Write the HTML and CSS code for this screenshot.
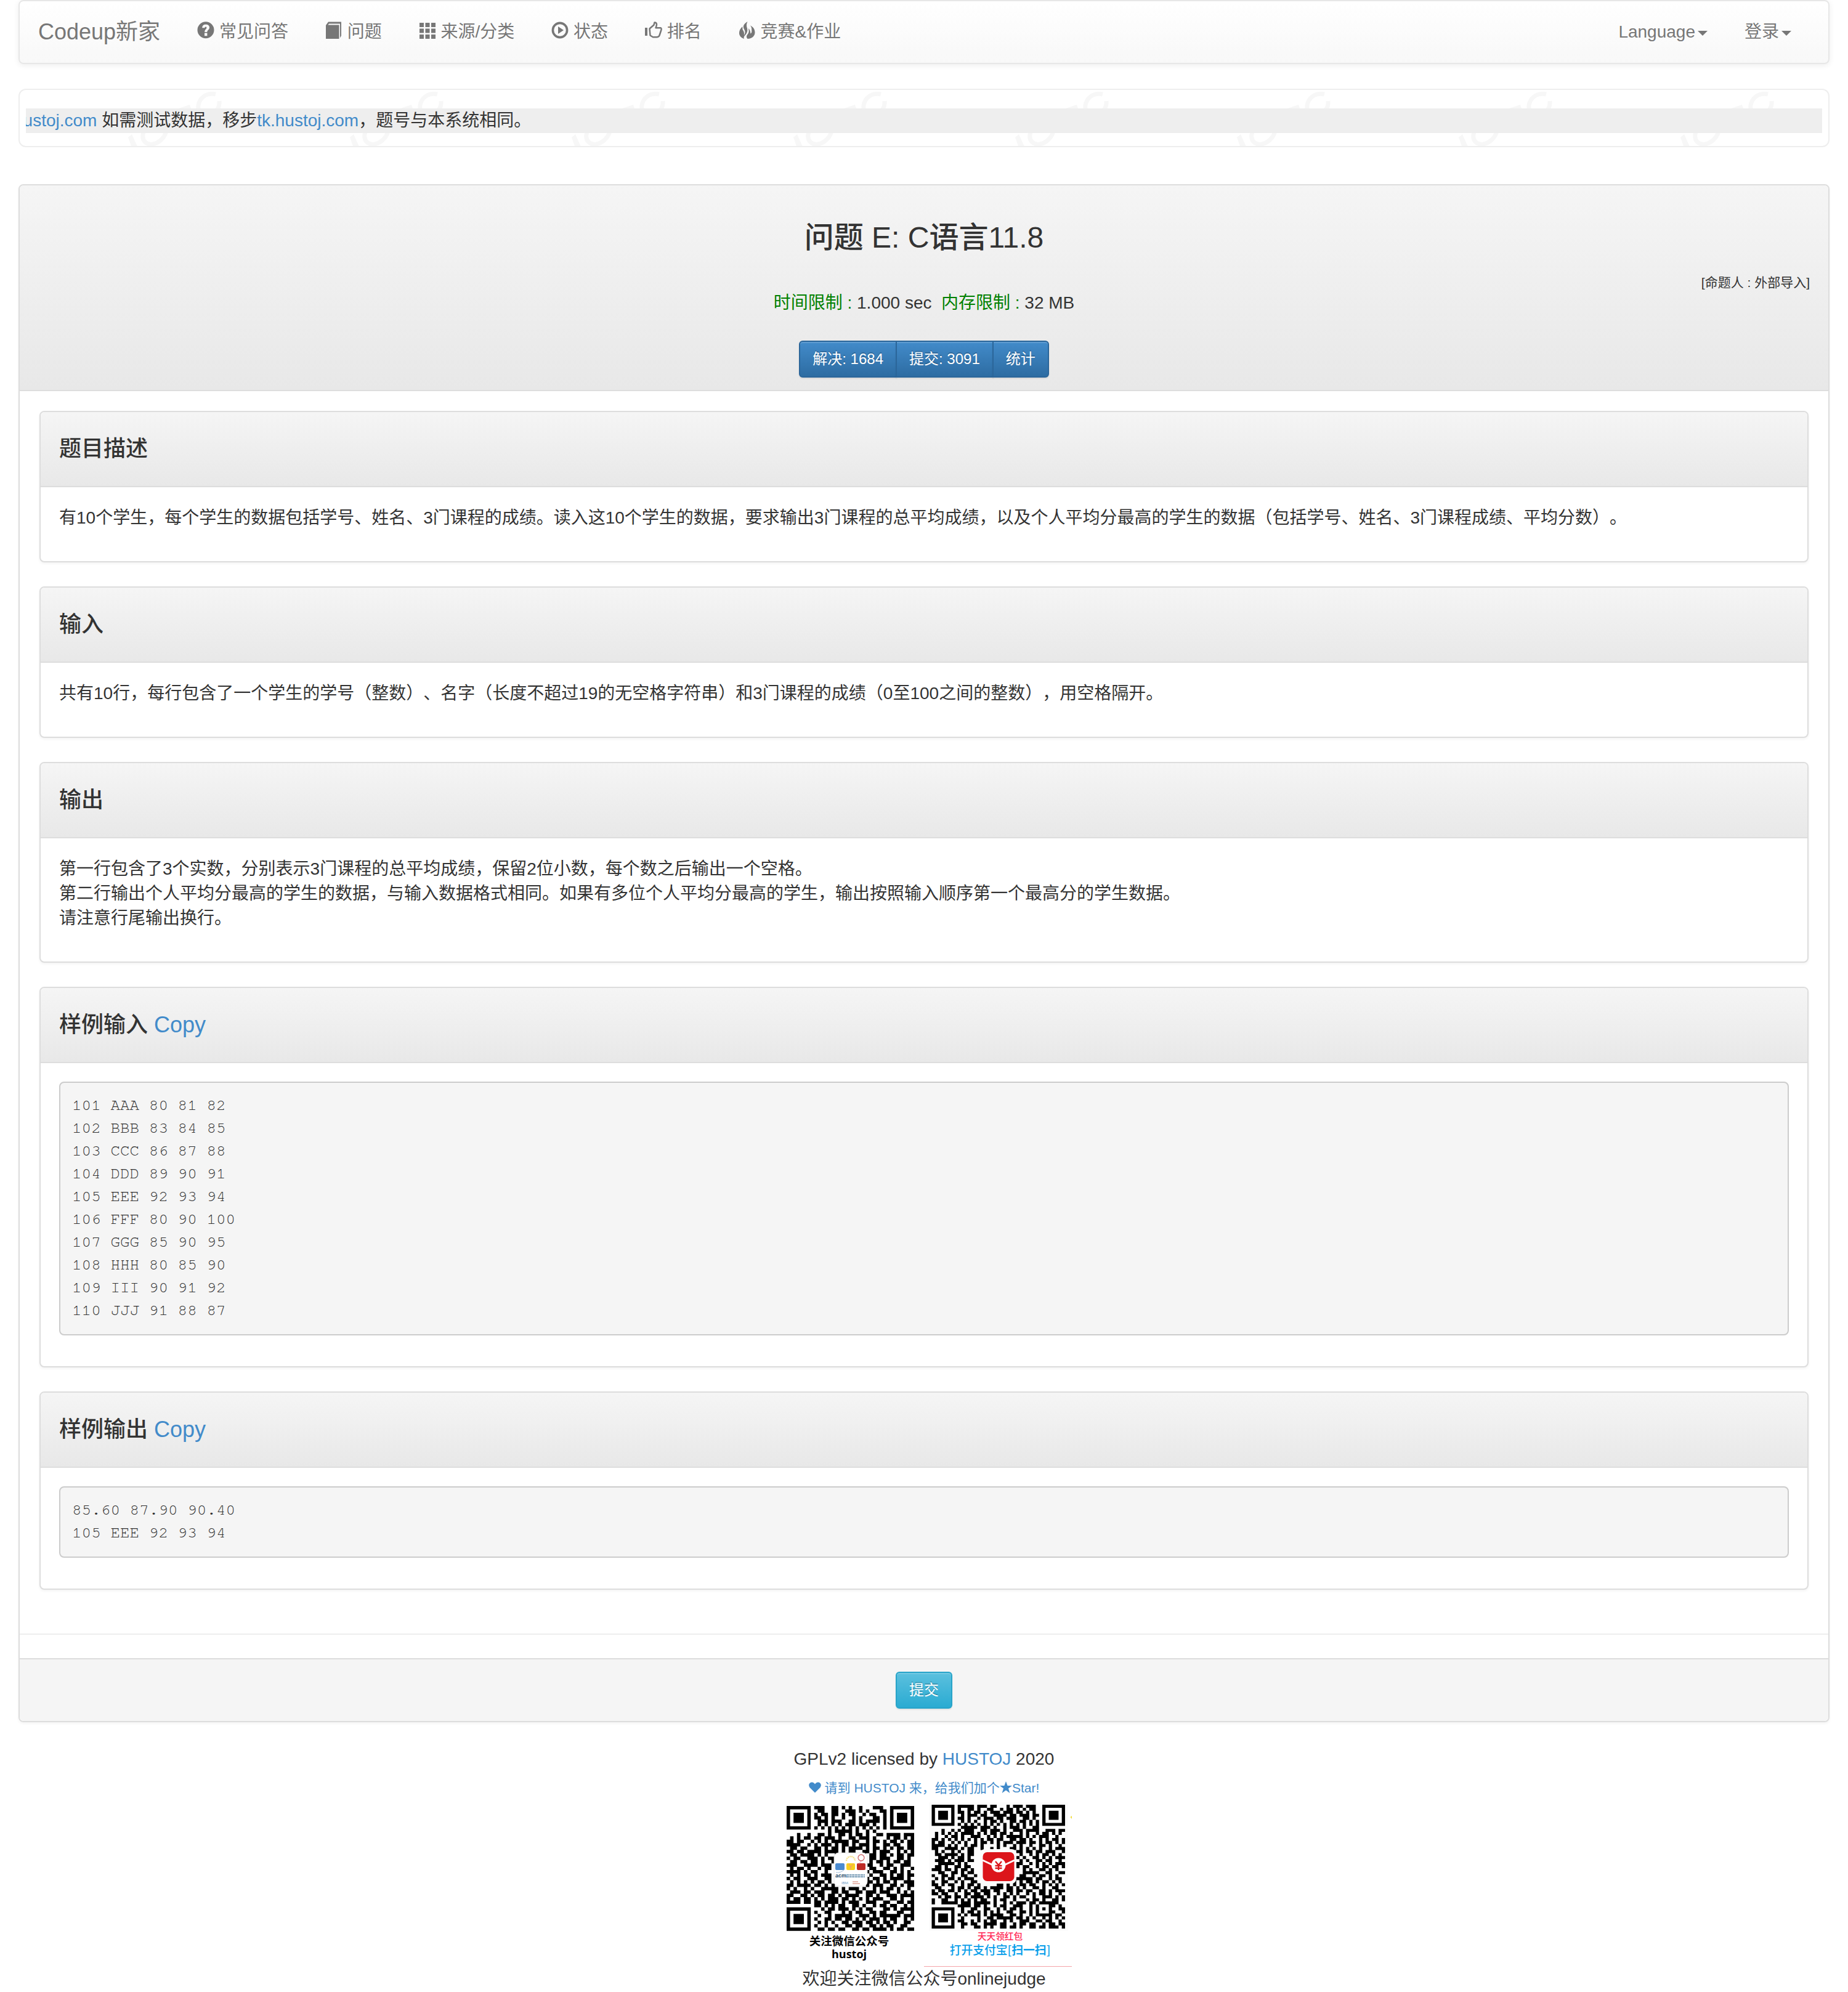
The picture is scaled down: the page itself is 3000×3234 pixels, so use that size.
FILE: index.html
```html
<!DOCTYPE html>
<html lang="zh-CN">
<head>
<meta charset="utf-8">
<title>问题 E: C语言11.8</title>
<link rel="stylesheet" href="styles.css">
</head>
<body>
<div class="container">
  <nav class="navbar">
    <a class="brand">Codeup新家</a>
    <ul class="nav">
      <li><svg class="icon" viewBox="0 0 28 28"><path fill-rule="evenodd" d="M14 .3a13.5 13.5 0 1 0 0 27a13.5 13.5 0 1 0 0-27zM12 18.6h4.4v4.6H12zM8.3 10.2C8.3 6.500 10.500 4.700 14.200 4.700c3.400 0 5.800 1.800 5.800 4.900c0 4-3.700 4.300-3.700 7.500H12.200c0-4.700 3.200-4.700 3.200-7.200c0-1-.5-1.500-1.500-1.500c-1.100 0-1.500.7-1.500 1.800z"/></svg> 常见问答</li>
      <li><svg class="icon" viewBox="0 0 28 28"><path d="M1 6L5 .5H26V23L24 26.500V3.500H6L4.500 5.500H22.500V28H1z"/></svg> 问题</li>
      <li><svg class="icon" viewBox="0 0 28 28"><path d="M1 2h7v7H1zM10.500 2h7v7h-7zM20 2h7v7h-7zM1 11.500h7v7H1zM10.500 11.500h7v7h-7zM20 11.500h7v7h-7zM1 21h7v7H1zM10.500 21h7v7h-7zM20 21h7v7h-7z"/></svg> 来源/分类</li>
      <li><svg class="icon" viewBox="0 0 28 28"><circle cx="14" cy="14" r="11.600" fill="none" stroke="currentColor" stroke-width="3.600"/><path d="M11 8l9 6l-9 6z"/></svg> 状态</li>
      <li><svg class="icon" viewBox="0 0 28 28"><path d="M0 10h4v13H0z"/><path fill="none" stroke="currentColor" stroke-width="2.500" stroke-linejoin="round" d="M7.500 11.500L14.500 5.500L15.500 1.500C20 1.200 19.500 6 17.500 10.200H25.500C27.500 11 26.700 13 26 15L23.500 22.500C22.500 25 21 25.200 19 25.200H13L8.500 22.500z"/></svg> 排名</li>
      <li><svg class="icon" viewBox="0 0 28 28"><path d="M14.500 0C8 4 6.500 8 9 12.500C11.500 17 10.500 20 8.800 22C9.500 18 8.500 15.500 6.500 13L6.300 8C2.500 11.500 1 15 1 18.500C1 23 4 26.500 9 28C7.800 25.500 9 24 11 21.800C15 17.500 14.800 13 13.500 9.500C12.500 6 13 3 14.500 0zM19 6.300C22 10.500 21 13 21.300 15.500C21.500 18 20 19.500 19.300 19.500C19.500 16 18 12.500 15.800 11C17.500 16 16.500 18.500 14 21.500C12.500 23.500 12.500 26 14.500 28C22.500 27.500 26.500 23 26.500 17.500C26.500 12 23 8.500 19 6.300z"/></svg> 竞赛&amp;作业</li>
    </ul>
    <ul class="nav nav-right">
      <li>Language<i class="caret"></i></li>
      <li>登录<i class="caret"></i></li>
    </ul>
  </nav>

  <section class="notice">
    <svg class="watermark" width="2936" height="91">
      <defs><pattern id="mark" x="160" y="0" width="360" height="91" patternUnits="userSpaceOnUse">
        <g fill="none" stroke="#f7f7f7" stroke-width="7"><path d="M158 7C146 4 135 10 131 21C128 30 131 37 138 38M148 38C158 36 165 31 164 18"/><ellipse cx="59" cy="69" rx="22" ry="16" transform="rotate(-45 59 69)"/></g>
        <path fill="#f7f7f7" d="M16 77L22 72L32 94H22zM92 32L116 24L120 36H92z"/>
      </pattern></defs>
      <rect width="2936" height="91" fill="url(#mark)"/>
    </svg>
    <div class="ticker"><span><a>hustoj.com</a> 如需测试数据，移步<a>tk.hustoj.com</a>，题号与本系统相同。</span></div>
  </section>

  <main class="panel problem">
    <header class="panel-heading problem-head">
      <h3>问题 E: C语言11.8</h3>
      <div class="author"><sub>[命题人 : 外部导入]</sub></div>
      <div class="limits"><span class="green">时间限制 : </span>1.000 sec&nbsp; <span class="green">内存限制 : </span>32 MB</div>
      <div class="btn-group"><a class="btn primary">解决: 1684</a><a class="btn primary">提交: 3091</a><a class="btn primary">统计</a></div>
    </header>
    <div class="sections">
      <section class="panel">
        <div class="panel-heading"><h4>题目描述</h4></div>
        <div class="panel-body"><p>有10个学生，每个学生的数据包括学号、姓名、3门课程的成绩。读入这10个学生的数据，要求输出3门课程的总平均成绩，以及个人平均分最高的学生的数据（包括学号、姓名、3门课程成绩、平均分数）。</p></div>
      </section>
      <section class="panel">
        <div class="panel-heading"><h4>输入</h4></div>
        <div class="panel-body"><p>共有10行，每行包含了一个学生的学号（整数）、名字（长度不超过19的无空格字符串）和3门课程的成绩（0至100之间的整数），用空格隔开。</p></div>
      </section>
      <section class="panel">
        <div class="panel-heading"><h4>输出</h4></div>
        <div class="panel-body"><p>第一行包含了3个实数，分别表示3门课程的总平均成绩，保留2位小数，每个数之后输出一个空格。<br>第二行输出个人平均分最高的学生的数据，与输入数据格式相同。如果有多位个人平均分最高的学生，输出按照输入顺序第一个最高分的学生数据。<br>请注意行尾输出换行。</p></div>
      </section>
      <section class="panel">
        <div class="panel-heading"><h4>样例输入 <a>Copy</a></h4></div>
        <div class="panel-body"><pre>101 AAA 80 81 82
102 BBB 83 84 85
103 CCC 86 87 88
104 DDD 89 90 91
105 EEE 92 93 94
106 FFF 80 90 100
107 GGG 85 90 95
108 HHH 80 85 90
109 III 90 91 92
110 JJJ 91 88 87</pre></div>
      </section>
      <section class="panel">
        <div class="panel-heading"><h4>样例输出 <a>Copy</a></h4></div>
        <div class="panel-body"><pre>85.60 87.90 90.40
105 EEE 92 93 94</pre></div>
      </section>
    </div>
    <hr>
    <footer class="panel-footer"><a class="btn info">提交</a></footer>
  </main>

  <footer class="site-footer">
    <div>GPLv2 licensed by <a>HUSTOJ</a> 2020</div>
    <div class="star-line"><a><svg class="mini" viewBox="0 0 20 20"><path d="M10 18.500L1.500 10C-1.500 6 1 1.500 5 1.500C7.500 1.500 9 3 10 4.500C11 3 12.500 1.500 15 1.500C19 1.500 21.500 6 18.500 10z"/></svg> 请到 HUSTOJ 来，给我们加个<svg class="mini" viewBox="0 0 20 20"><path d="M10 0L12.600 7H20L14 11.600L16.300 19L10 14.600L3.700 19L6 11.600L0 7H7.400z"/></svg>Star!</a></div>
    <div class="codes">
      <svg width="240" height="272" viewBox="0 0 240 272">
        <g transform="translate(17 10) scale(5.595 5.48)"><path id="qr-wechat"/></g>
        <rect x="94" y="86" width="54" height="54" rx="7" fill="#fff" stroke="#ddd" stroke-width=".8"/>
        <rect x="96" y="103" width="15" height="11" rx="2" fill="#4b8bd0"/><rect x="114" y="103" width="14" height="11" rx="2" fill="#f8cf20"/><rect x="131" y="103" width="14" height="11" rx="2" fill="#bd2a25"/>
        <path d="M114 99a7 7 0 0 1 14 0" fill="none" stroke="#f5e08a" stroke-width="2.500" stroke-dasharray="2 1"/><circle cx="138" cy="94" r="5" fill="none" stroke="#c66" stroke-width="1.300"/><path d="M138 99l-4 6M118 104l3 5l4-5M121 109v4" fill="none" stroke="#e7a" stroke-width=".8"/><path d="M97 118q8 1 14-5" fill="none" stroke="#8ac" stroke-width=".8"/>
        <text x="96" y="126" class="logo-text acm">acm</text><path d="M114 122h30M114 125h30" stroke="#48789c" stroke-width="1.600" stroke-dasharray="4 .6"/>
        <text x="106" y="137" class="logo-text ibm">IBM.</text><path d="M124 133h9M124 136h12" stroke="#cf7563" stroke-width="1.200"/>
        <text x="118.500" y="236" class="cap-black">关注微信公众号</text>
        <text x="118.500" y="256.500" class="cap-black cap-en">hustoj</text>
      </svg><svg width="240" height="272" viewBox="0 0 240 272">
        <rect x="8" y="4" width="226" height="209" fill="#fcfcfc"/>
        <g transform="translate(12.500 8) scale(5.280 4.900)"><path id="qr-alipay"/></g>
        <rect x="91" y="80" width="59" height="56" rx="8" fill="#fcfcfc"/>
        <rect x="95.500" y="85" width="51" height="47" rx="7" fill="#dc151b"/>
        <path d="M95 98L112 106M147 98L130 106" stroke="#fff" stroke-width="3"/><circle cx="121" cy="106" r="11.500" fill="#fff"/>
        <path d="M116 100l5 6l5-6M121 106v8M115.500 107h11M115.500 111h11" fill="none" stroke="#dc151b" stroke-width="2.300"/>
        <text x="123.500" y="226.500" class="cap-red">天天领红包</text>
        <text x="123.500" y="251" class="cap-blue">打开支付宝[<tspan class="heavy">扫一扫</tspan>]</text>
        <path d="M0 270.500h240" stroke="#f5a3a9"/><path d="M237.500 28l2.500-2v5z" fill="#f3dc35"/>
      </svg>
    </div>
    <div class="welcome">欢迎关注微信公众号onlinejudge</div>
  </footer>
</div>
<script src="codes.js"></script>
</body>
</html>
```
FILE: styles.css
```css
* { box-sizing: border-box; }
body { margin: 0; background: #fff; color: #333; font: 28px/40px "Liberation Sans", "Noto Sans CJK SC", sans-serif; text-spacing-trim: space-all; }
a { color: #428bca; text-decoration: none; }
h3, h4, p, ul, pre { margin: 0; padding: 0; }
.container { width: 2940px; margin: 0 auto; }

.navbar { display: flex; height: 104px; border: 2px solid #e7e7e7; border-radius: 8px; padding: 0 30px; color: #777; background: linear-gradient(#fff, #f8f8f8); box-shadow: 0 2px 10px rgba(0,0,0,.075); }
.brand { color: #777; font-size: 36px; padding: 30px 30px 0 0; white-space: nowrap; }
.nav { display: flex; list-style: none; }
.nav li { padding: 30px 30px 0; white-space: nowrap; }
.nav-right { margin-left: auto; }
.icon { width: 28px; height: 28px; fill: currentColor; vertical-align: -2px; }
.caret { display: inline-block; margin-left: 4px; border: 8px solid transparent; border-top-color: #777; border-bottom: 0; vertical-align: middle; }

.notice { position: relative; height: 95px; margin-top: 40px; border: 2px solid #eee; border-radius: 12px; padding: 30px 10px; overflow: hidden; }
.watermark { position: absolute; left: 0; top: 0; }
.ticker { position: relative; height: 40px; background: #eee; overflow: hidden; white-space: nowrap; line-height: 39px; }
.ticker span { margin-left: -20px; }

.panel { border: 2px solid #ddd; border-radius: 8px; background: #fff; box-shadow: 0 2px 4px rgba(0,0,0,.05); }
.problem { margin-top: 60px; }
.panel-heading { padding: 20px 30px; border-bottom: 2px solid #ddd; border-radius: 6px 6px 0 0; background: linear-gradient(#f5f5f5, #e8e8e8); }
.panel-heading h4 { font-size: 36px; font-weight: 500; line-height: 39.6px; margin: 20px 0; }
.problem-head { text-align: center; height: 334px; }
.problem-head h3 { font-size: 48px; font-weight: 500; line-height: 52px; margin: 39px 0 19px; }
.author { text-align: right; height: 40px; line-height: 37px; }
.author sub { font-size: 21px; line-height: 0; }
.limits { height: 82px; line-height: 41px; }
.green { color: #008000; }
.btn-group { display: flex; justify-content: center; }
.btn { display: inline-block; height: 60px; padding: 10px 20px; border: 2px solid; border-radius: 6px; color: #fff; font-size: 24px; line-height: 35px; text-shadow: 0 -2px 0 rgba(0,0,0,.2); box-shadow: inset 0 2px 0 rgba(255,255,255,.15), 0 2px 2px rgba(0,0,0,.075); }
.primary { border-color: #2b669a; background: #3b7ab4 linear-gradient(#428bca, #2d6ca2); }
.btn-group .btn { border-radius: 0; }
.btn-group .btn + .btn { margin-left: -2px; }
.btn-group .btn:first-child { border-radius: 6px 0 0 6px; }
.btn-group .btn:last-child { border-radius: 0 6px 6px 0; }
.info { border-color: #28a4c9; background: linear-gradient(#5bc0de, #2aabd2); }

.sections { display: flex; flex-direction: column; gap: 39.5px; padding: 32px 32px 30px; }
.panel-body { padding: 30px; }
.panel-body p { margin-bottom: 20px; }
pre { margin-bottom: 20px; padding: 18px 19px 20px; border: 2px solid #ccc; border-radius: 8px; background: #f5f5f5; font: 26px/37px "Nimbus Mono PS", "Nimbus Mono L", "Courier 10 Pitch", FreeMono, "Liberation Mono", monospace; }
hr { height: 2px; margin: 41px 0 38px; border: 0; background: #eee; }
.panel-footer { height: 102px; padding: 20px; border-top: 2px solid #ddd; border-radius: 0 0 6px 6px; background: #f5f5f5; text-align: center; line-height: 0; }

.site-footer { margin-top: 40px; text-align: center; }
.star-line { font-size: 21px; height: 46px; padding-top: 7px; }
.mini { width: 20px; height: 20px; fill: currentColor; vertical-align: -2px; }
.codes { display: flex; justify-content: center; height: 272px; }
.welcome { height: 38px; line-height: 38px; }
svg text { font-family: "Noto Sans CJK SC", sans-serif; text-anchor: middle; }
svg .logo-text { text-anchor: start; font-family: "Liberation Sans", sans-serif; }
.acm { font-size: 9px; font-weight: 700; fill: #234765; }
.ibm { font-size: 6px; fill: #6d9bc5; }
.cap-black { font-size: 18.500px; font-weight: 700; }
svg .cap-en { font-family: "Open Sans", sans-serif; font-size: 18px; }
.cap-red { font-size: 14.700px; fill: #ff2855; font-weight: 500; }
.cap-blue { font-size: 18.800px; fill: #0a9fea; font-weight: 500; }
.heavy { font-weight: 700; }
```
FILE: codes.js
```js
const wechat = [
  "#######.###..##.#.#..#...###..#######",
  "#.....#..##..##..###.#.#...##.#.....#",
  "#.###.#.#.##.##.#.##..#.##..#.#.###.#",
  "#.###.#.##.#.#..#..#.#...##.#.#.###.#",
  "#.###.#..###.###..##.#.####.#.#.###.#",
  "#.....#..#.#.#.#.###.###.#..#.#.....#",
  "#######.#.#.#.#.#.#.#.#.#.#.#.#######",
  "............#.#####.#..#.#...........",
  "...#..#..##.#..##.#.##.#..##.####.###",
  ".#.#.##.##.###.#..##.###.#...#.##.#.#",
  "##.##..#.#.#.#####.##..#.##.#.##.#.##",
  "####..#.#.###.#.##.#.###.#..##.##..##",
  ".##.##..##.#.##.#.####.#.##.#.#.##.##",
  "##.##.####.####.#.##..##.#.###..#.#.#",
  ".##.####.#.#..#.....#.#.##.##.#.##.##",
  "#.##..###.#.##..........##.###..##.#.",
  ".##.##.##.#..#..........#.##.#.##.##.",
  "###..####.###..........##..#.##..###.",
  ".#.##.#..#.##...........##..##.#.#..#",
  "####.#.##..#..........##.###..##.#.#.",
  ".#.#.##.#.###...........#..##.#.##.##",
  "#.##..###..##..........#.##.#.####.#.",
  ".#.#.#.#.##.#..........##.#.##.#..###",
  "##.####.##.#.#.........#.###..##.#.##",
  "#.#..#.#..#####.#.###.#..#.#.##.#..#.",
  ".###.##.###..##.##..##.###.###..#.#.#",
  "##..##.#.##.##.#.####..##.#..###.####",
  "#.##.##.#.#.###.##.#.#.#.###..##.#..#",
  "####.##.##.####.#.###..###..##..##.##",
  "........##.#.#.##..##.#..#.##.##..#.#",
  "#######...#.##.###.#.#.##...##.#.####",
  "#.....#.#..##...#.#.##..##.##...##..#",
  "#.###.#..#..#.#####..###.#.######.###",
  "#.###.#.#..##.##.##.#.#.###.#.##..#.#",
  "#.###.#..#.#.#..##.###.##.#.##.#..##.",
  "#.....#.#..#..#..##.##..##.#.##..##..",
  "#######..##.##.##..##.##.####.#.##.##"
];
const alipay = [
  "#######.#####.###.##...#.###.###..#######",
  "#.....#.#..##.#..##..#.##.#.#.##..#.....#",
  "#.###.#.##.#.##.#.###.###.##.#.#..#.###.#",
  "#.###.#..#.###.##..####.##.###.##.#.###.#",
  "#.###.#.##.#..#.###.##.###..##.#..#.###.#",
  "#.....#..#.#.#..#.##.#..##.##.#.#.#.....#",
  "#######.#.#.#.#.#.#.#.#.#.#.#.#.#.#######",
  ".........#####.###.#..#.###.#..##........",
  "...#..#.#.###..##.###.#..###.####..###.##",
  ".#.#.#.#.####.#.#.##.##.#..#.#..#.##.#.#.",
  ".#..#.##.#..###..#.#.#.#####.#.#.###..#..",
  "##.#.#.#.#.#.#.#.##.##..##.##.#..#.#.##.#",
  "#.##..#.#.#..#.##.#.#.###.###.##.#.##.#.#",
  "####.#.#..#.##.#....#.#..#.#..#..##.#..#.",
  "##..####.#.##..#..#.#...##.#.#.#.#..#.###",
  ".#.#..#.#..##.............##.##.##.###..#",
  ".##.####.#.##..............#..#.#.##.#.#.",
  "..###.#.##.#.............##.#..##.#.#.###",
  ".###.#.###.##..............#.#..##.##..#.",
  "..#####.#.#..............###..#.#.#.#.###",
  ".##.#..##.##.............##.##..#.##.##.#",
  "###.##.#.##.#............#..#.#..##.#.#..",
  "..##..##.#.##...............#####..##..##",
  "#..##.#..##..#.............##..#.##.#.#..",
  ".#.#.##.#.###............######.##..#.##.",
  "#..##..#.#..##...........#.#.##.#.##.#.#.",
  "##.#.##..#.##.#.....##.#.#.##.##..#.#.#.#",
  ".##...#.##.#.##.#.####.##.#.#..##.#..##..",
  "#.##.##.#.#.##.###.##..##.##.##..##.#.###",
  "##.##..#..##.##.##..#.#.#.#..#.#.##.#..#.",
  "..#.##.##.#.####.#.#..##.#.##..#..###.#.#",
  "#..##..#.#.#.#.##..#.##..#...#.##.#..##.#",
  "#..#####.###.#####.#..#.#.###.##.######..",
  "........####.##.#..#.##..###..#.#...##.#.",
  "#######..#..##..##..#.#.##.#..#.#.#.#..##",
  "#.....#..#.##.#.#.#.#..##..##.#.#...##..#",
  "#.###.#.#.#.###.#.####..##.#..#.#####.##.",
  "#.###.#..#....#..##.#####.##.#.#..#.#.#.#",
  "#.###.#.##..#.#.#.##..#.#..###..##.##..#.",
  "#.....#..##.##..####.##..#.##.##..#.##.##",
  "#######..#...##.#.#..##.##.#..##.##.###.#"
];
function draw(id, rows) {
  let d = "";
  rows.forEach((row, y) => {
    for (const run of row.matchAll(/#+/g)) d += `M${run.index} ${y}h${run[0].length}v1h-${run[0].length}z`;
  });
  document.getElementById(id).setAttribute("d", d);
}
draw("qr-wechat", wechat);
draw("qr-alipay", alipay);
```
